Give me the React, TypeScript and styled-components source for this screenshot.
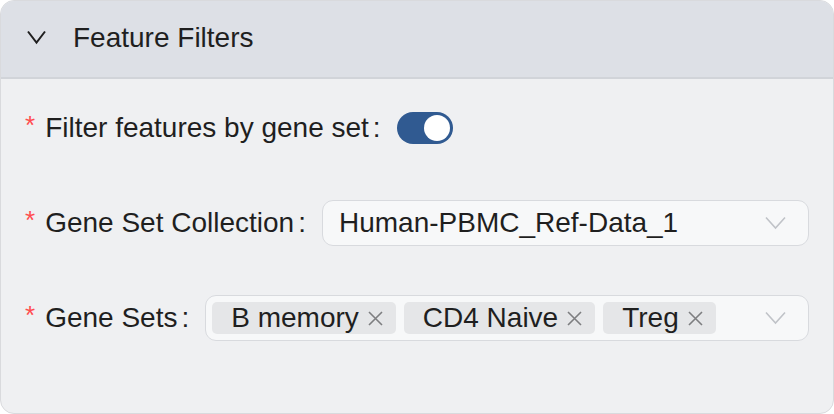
import React from 'react'
import styled, { createGlobalStyle } from 'styled-components'

const GlobalStyle = createGlobalStyle`
  html, body {
    margin: 0;
    padding: 0;
    background: #ffffff;
  }
  body {
    font-family: "Liberation Sans", Arial, sans-serif;
  }
`

const Panel = styled.div`
  box-sizing: border-box;
  width: 834px;
  height: 414px;
  border: 1px solid #d9dadd;
  border-radius: 14px;
  overflow: hidden;
  background: #eff0f2;
  display: flex;
  flex-direction: column;
`

const Header = styled.div`
  box-sizing: border-box;
  height: 78px;
  flex-shrink: 0;
  display: flex;
  align-items: center;
  padding: 0 23px 2px;
  background: #dde0e6;
  border-bottom: 2px solid #d1d4d9;
  color: #1f1f1f;
  font-size: 28px;
`

const Arrow = styled.svg`
  width: 24px;
  height: 24px;
  margin-right: 25px;
  flex-shrink: 0;
`

const Body = styled.div`
  display: flex;
  flex-direction: column;
  gap: 49px;
  padding: 26px 24px 24px 24px;
`

const Row = styled.div`
  height: 46px;
  display: flex;
  align-items: center;
`

const Label = styled.label`
  display: flex;
  align-items: center;
  flex-shrink: 0;
  font-size: 28px;
  color: #1f1f1f;
  white-space: nowrap;
`

const Required = styled.span`
  color: #ff4d4f;
  font-size: 26px;
  margin-right: 10px;
  position: relative;
  top: -3px;
`

const Colon = styled.span`
  margin: 0 16px 0 4px;
`

const Switch = styled.button`
  box-sizing: border-box;
  width: 56px;
  height: 32px;
  border: none;
  border-radius: 16px;
  padding: 3px;
  background: #305a91;
  display: flex;
  justify-content: flex-end;
  align-items: center;
  cursor: pointer;
`

const Knob = styled.span`
  width: 26px;
  height: 26px;
  border-radius: 50%;
  background: #ffffff;
`

const Select = styled.div<{ $multi?: boolean }>`
  box-sizing: border-box;
  flex: 1;
  height: 46px;
  display: flex;
  align-items: center;
  gap: 8px;
  padding: 0 22px 0 ${({ $multi }) => ($multi ? '6px' : '16px')};
  background: #f7f8f9;
  border: 1.5px solid #d8dade;
  border-radius: 11px;
  font-size: 28px;
  color: #1f1f1f;
`

const Value = styled.span`
  flex: 1;
  white-space: nowrap;
`

const Tags = styled.div`
  flex: 1;
  display: flex;
  gap: 8px;
`

const Tag = styled.span`
  box-sizing: border-box;
  height: 32px;
  display: inline-flex;
  align-items: center;
  gap: 8px;
  padding: 0 12px 0 19px;
  background: #e5e6e8;
  border-radius: 5px;
  font-size: 28px;
  color: #1f1f1f;
  white-space: nowrap;
`

const Close = styled.svg`
  width: 17px;
  height: 17px;
`

const Caret = styled.svg`
  width: 21px;
  height: 14px;
  flex-shrink: 0;
`

const ChevronDown = () => (
  <Caret viewBox="0 0 21 14">
    <polyline points="1,1.5 10.5,12 20,1.5" fill="none" stroke="#c0c3c8" strokeWidth="1.6" />
  </Caret>
)

const Remove = () => (
  <Close viewBox="0 0 17 17">
    <path d="M2 2 L15 15 M15 2 L2 15" stroke="#7d7e80" strokeWidth="1.6" fill="none" />
  </Close>
)

const geneSets = ['B memory', 'CD4 Naive', 'Treg']

const App = () => {
  return (
    <>
      <GlobalStyle />
      <Panel>
        <Header>
          <Arrow viewBox="0 0 24 24">
            <polyline points="4,5.5 12.5,16.5 21,5.5" fill="none" stroke="#1f1f1f" strokeWidth="2" />
          </Arrow>
          Feature Filters
        </Header>
        <Body>
          <Row>
            <Label>
              <Required>*</Required>
              Filter features by gene set
              <Colon>:</Colon>
            </Label>
            <Switch aria-checked="true" role="switch">
              <Knob />
            </Switch>
          </Row>
          <Row>
            <Label>
              <Required>*</Required>
              Gene Set Collection
              <Colon>:</Colon>
            </Label>
            <Select>
              <Value>Human-PBMC_Ref-Data_1</Value>
              <ChevronDown />
            </Select>
          </Row>
          <Row>
            <Label>
              <Required>*</Required>
              Gene Sets
              <Colon>:</Colon>
            </Label>
            <Select $multi>
              <Tags>
                {geneSets.map((name) => (
                  <Tag key={name}>
                    {name}
                    <Remove />
                  </Tag>
                ))}
              </Tags>
              <ChevronDown />
            </Select>
          </Row>
        </Body>
      </Panel>
    </>
  )
}

export default App
